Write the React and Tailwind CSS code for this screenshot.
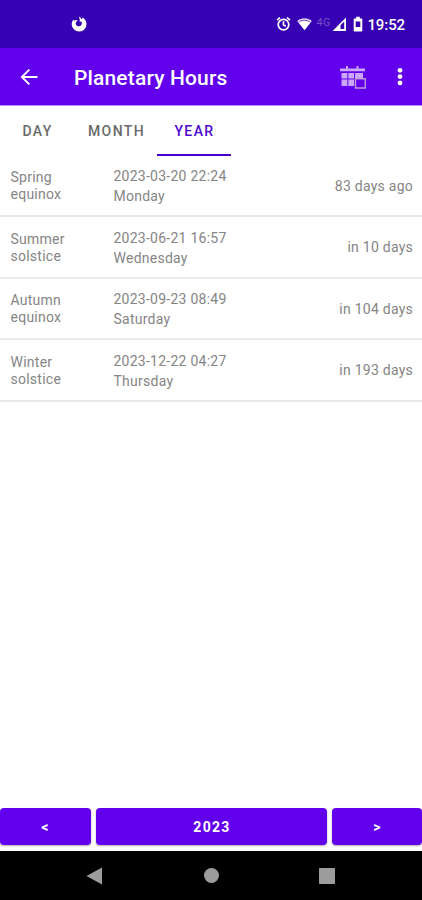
import React from 'react';

const events = [
  { season: 'Spring', kind: 'equinox', date: '2023-03-20 22:24', day: 'Monday', distance: '83 days ago' },
  { season: 'Summer', kind: 'solstice', date: '2023-06-21 16:57', day: 'Wednesday', distance: 'in 10 days' },
  { season: 'Autumn', kind: 'equinox', date: '2023-09-23 08:49', day: 'Saturday', distance: 'in 104 days' },
  { season: 'Winter', kind: 'solstice', date: '2023-12-22 04:27', day: 'Thursday', distance: 'in 193 days' },
];

function StatusBar() {
  return (
    <div className="flex h-12 items-center bg-[#3700b3] pl-[71px] pr-[17px] text-white">
      <svg className="h-4 w-4" viewBox="0 0 16 16">
        <path
          fillRule="evenodd"
          fill="currentColor"
          d="M7.9 0.6c1.2.5 2 1.4 2.3 2.6.9-.2 1.3-.8 1.4-1.6 2.3 1.3 3.9 3.6 3.9 6.4A7.4 7.4 0 0 1 .7 8.4c0-1.9.7-3.8 1.9-5 .1.6.3 1 .7 1.3.8-.6 2-.8 3.2-.5-.5.7-.9 1.2-1.4 1.7-.5.8-.5 2 .1 3 1.1 1.7 3.8 1.9 5 .3 1-1.3.9-3-.3-4.1-.1.7-.5 1.1-1.1 1.3.1-2-.1-3.700-.9-5.800z"
        />
      </svg>
      <div className="ml-auto flex items-center">
        <svg className="h-4 w-[15px]" viewBox="0 0 15 16" fill="none" stroke="currentColor" strokeWidth="1.7">
          <circle cx="7.5" cy="8.6" r="5.3" />
          <path d="M7.5 5.3v3.6l2.3 1.4M1 4.1l3-2.500M14 4.1l-3-2.500" />
        </svg>
        <svg className="ml-[6px] h-4 w-[15px]" viewBox="0 0 15 16">
          <path fill="currentColor" fillOpacity="0.85" d="M.2 4.9C4.5 1.3 10.5 1.3 14.8 4.9L7.5 14z" />
          <path fill="currentColor" d="M1.8 6.7c3.6-2.6 7.8-2.6 11.4 0L7.5 14z" />
          <path d="M2.300 5.900c3.300-2.200 7.100-2.200 10.400 0" fill="none" stroke="#3700b3" strokeWidth="0.7" />
        </svg>
        <span className="mb-[4px] ml-[4px] w-[15px] font-[Roboto] text-[11px] leading-none tracking-[0.5px] text-[#7650cb]">4G</span>
        <svg className="ml-[1px] h-4 w-[15px]" viewBox="0 0 15 16">
          <path fill="currentColor" fillRule="evenodd" d="M.5 15 14 1.5V15zM8.500 9.200V13h3.700V5.400z" />
        </svg>
        <svg className="ml-[6px] h-4 w-[10px]" viewBox="0 0 10 16">
          <path
            fill="currentColor"
            fillRule="evenodd"
            d="M3.2.8h3.6v1.600h1.500c.6 0 1 .4 1 1v11c0 .6-.4 1-1 1H1.700c-.6 0-1-.4-1-1v-11c0-.6.4-1 1-1h1.500zM2.700 5.500V11h4.600V5.500z"
          />
        </svg>
        <span className="ml-[4px] mt-[2px] font-[Roboto] text-[15px] font-medium leading-none tracking-[-0.1px]">19:52</span>
      </div>
    </div>
  );
}

function CalendarIcon() {
  return (
    <svg className="mt-[2px] h-6 w-7" viewBox="0 0 28 24">
      <g fill="#cba6fa">
        <path d="M1 2.500h25v2.800H1zM7 0h2v4H7zM17.500 0h2v4h-2z" />
        <path d="M2.500 7h5.800v5.500H2.500zM9.300 7h5.800v5.500H9.300zM16.100 7H24v5.500h-7.900zM2.500 13.500h5.800V20H2.500zM9.300 13.500h5.800V20H9.300z" />
      </g>
      <path d="M16.500 12.700h9.800v9.300h-9.800z" fill="#6200ee" stroke="#bd9acf" strokeWidth="1.4" />
    </svg>
  );
}

function AppBar() {
  return (
    <header className="flex h-[57px] items-center bg-[#6200ee] pl-[19px] pr-3 pt-[1px] text-white">
      <svg className="h-5 w-5" viewBox="0 0 20 20" fill="none" stroke="currentColor" strokeWidth="2">
        <path d="M18.5 10H3.5M10.3 2.600 2.900 10l7.400 7.400" />
      </svg>
      <h1 className="ml-[35px] mt-[1px] font-[Roboto] text-[21px] font-medium leading-6 tracking-[0.15px]">Planetary Hours</h1>
      <div className="ml-auto flex items-center">
        <CalendarIcon />
        <svg className="ml-[23px] h-5 w-5" viewBox="0 0 20 20" fill="currentColor">
          <circle cx="10" cy="3.3" r="2.4" />
          <circle cx="10" cy="9.6" r="2.4" />
          <circle cx="10" cy="15.9" r="2.4" />
        </svg>
      </div>
    </header>
  );
}

function Tabs() {
  return (
    <nav className="flex h-[51px] border-t border-[#b58af5] font-[Roboto] text-[14px] font-medium tracking-[1.4px] text-[#6a6a6a]">
      <button className="w-[75px] pt-[1px]">DAY</button>
      <button className="w-[82px] pl-[1px] pt-[1px]">MONTH</button>
      <button className="w-[74px] border-b-2 border-[#4a00c8] pl-[1px] pt-[3px] text-[#4d08cf]">YEAR</button>
    </nav>
  );
}

function EventRow({ event }) {
  return (
    <li className="flex h-[61.4px] items-center border-b-2 border-[#e9e9e9] pl-[10.5px] pr-[9px] pt-[1.4px]">
      <div className="w-[103px] leading-[17px]">
        <div>{event.season}</div>
        <div>{event.kind}</div>
      </div>
      <div className="leading-5">
        <div>{event.date}</div>
        <div>{event.day}</div>
      </div>
      <div className="ml-auto">{event.distance}</div>
    </li>
  );
}

function YearPicker() {
  return (
    <div className="flex h-[43px] gap-[5px] pb-[6px] font-[Roboto] text-[14px] font-bold tracking-[1.3px] text-white">
      <button className="w-[91px] rounded-[4px] bg-[#6200ee] pt-[2px] shadow-[0_1px_2px_#0005]">&lt;</button>
      <button className="flex-1 rounded-[4px] bg-[#6200ee] pl-[1px] pt-[2px] shadow-[0_1px_2px_#0005]">2023</button>
      <button className="w-[90px] rounded-[4px] bg-[#6200ee] pl-[1px] pt-[2px] shadow-[0_1px_2px_#0005]">&gt;</button>
    </div>
  );
}

function SystemNav() {
  return (
    <div className="flex h-[49px] items-center bg-black pl-[86px] text-[#9c9c9c]">
      <svg className="h-[18px] w-4" viewBox="0 0 16 18" fill="currentColor">
        <path d="M.5 9 16 .5v17z" />
      </svg>
      <div className="ml-[102px] h-[15px] w-[15px] rounded-full bg-[#9c9c9c]" />
      <div className="ml-[100px] h-4 w-4 rounded-[1px] bg-[#9c9c9c]" />
    </div>
  );
}

function App() {
  return (
    <div className="flex h-[900px] w-[422px] flex-col overflow-hidden bg-white">
      <StatusBar />
      <AppBar />
      <Tabs />
      <ul className="flex-1 font-[Roboto] text-[14px] tracking-[0.25px] text-[#858585]">
        {events.map((event) => (
          <EventRow key={event.date} event={event} />
        ))}
      </ul>
      <YearPicker />
      <SystemNav />
    </div>
  );
}

export default App;
